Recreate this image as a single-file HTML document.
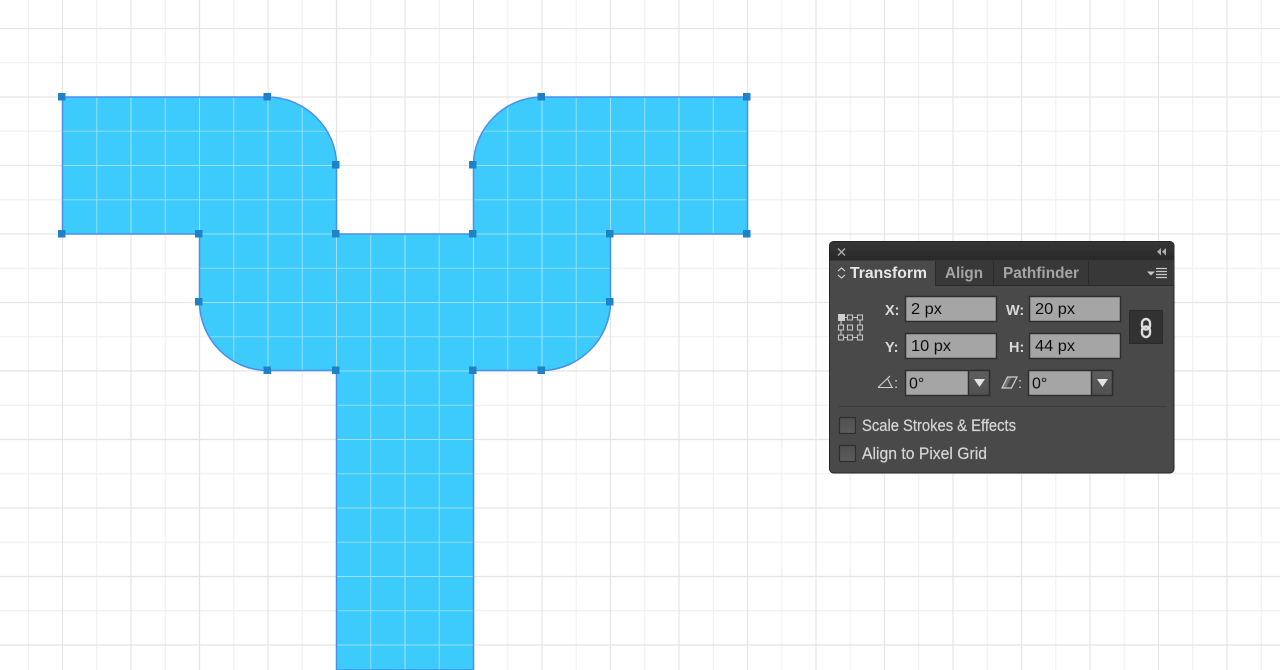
<!DOCTYPE html>
<html><head><meta charset="utf-8"><style>
html,body{margin:0;padding:0;background:#fff;width:1280px;height:670px;overflow:hidden}
svg{display:block;position:absolute;left:0;top:0}
text{font-family:"Liberation Sans",sans-serif}
</style></head><body>
<svg width="1280" height="670" viewBox="0 0 1280 670" xmlns="http://www.w3.org/2000/svg">
<defs>
<clipPath id="s"><path d="M62.5 97H267.5C305 97 336.5 128 336.5 165V234H473.5V165C473.5 128 505 97 541.5 97H747.5V234H610.5V302C610.5 339 579 370.5 541.5 370.5H473.5V670H336.5V370.5H267.5C230 370.5 199.5 339 199.5 302V234H62.5Z"/></clipPath>
<linearGradient id="hd" x1="0" y1="0" x2="0" y2="1"><stop offset="0" stop-color="#353535"/><stop offset="1" stop-color="#2a2a2a"/></linearGradient>
<linearGradient id="ar" x1="0" y1="0" x2="0" y2="1"><stop offset="0" stop-color="#5e5e5e"/><stop offset="1" stop-color="#505050"/></linearGradient>
<linearGradient id="cb" x1="0" y1="0" x2="0" y2="1"><stop offset="0" stop-color="#505050"/><stop offset="1" stop-color="#5c5c5c"/></linearGradient>
<filter id="soft" x="-5%" y="-5%" width="110%" height="110%"><feGaussianBlur stdDeviation="0.3"/></filter>
<path id="major" d="M62.5 0V670M131 0V670M199.5 0V670M268 0V670M336.500 0V670M405 0V670M473.500 0V670M542 0V670M610.500 0V670M679 0V670M747.500 0V670M816 0V670M884.500 0V670M953 0V670M1021.500 0V670M1090 0V670M1158.500 0V670M1227 0V670M0 28.500H1280M0 97H1280M0 165.500H1280M0 234H1280M0 302.500H1280M0 371H1280M0 439.500H1280M0 508H1280M0 576.500H1280M0 645H1280"/>
<path id="minor" d="M28.500 0V670M96.750 0V670M165.250 0V670M233.750 0V670M302.250 0V670M370.750 0V670M439.250 0V670M507.750 0V670M576.250 0V670M644.750 0V670M713.250 0V670M781.750 0V670M850.250 0V670M918.750 0V670M987.250 0V670M1055.750 0V670M1124.250 0V670M1192.750 0V670M1261.250 0V670M0 62.750H1280M0 131.250H1280M0 199.750H1280M0 268.250H1280M0 336.750H1280M0 405.250H1280M0 473.750H1280M0 542.250H1280M0 610.750H1280"/>
</defs>
<rect width="1280" height="670" fill="#fff"/>
<use href="#minor" fill="none" stroke="#f1f1f2" stroke-width="1.200"/>
<use href="#major" fill="none" stroke="#e5e5e6" stroke-width="1.200"/>
<path d="M62.5 97H267.5C305 97 336.5 128 336.5 165V234H473.5V165C473.5 128 505 97 541.5 97H747.5V234H610.5V302C610.5 339 579 370.5 541.5 370.5H473.5V670H336.5V370.5H267.5C230 370.5 199.5 339 199.5 302V234H62.5Z" fill="#3ccbfb"/>
<g clip-path="url(#s)">
<use href="#minor" fill="none" stroke="#8edcf8" stroke-width="1.100"/>
<use href="#major" fill="none" stroke="#9ce0f9" stroke-width="1.100"/>
</g>
<path d="M62.5 97H267.5C305 97 336.5 128 336.5 165V234H473.5V165C473.5 128 505 97 541.5 97H747.5V234H610.5V302C610.5 339 579 370.5 541.5 370.5H473.5V670H336.5V370.5H267.5C230 370.5 199.5 339 199.5 302V234H62.5Z" fill="none" stroke="#4a8ff0" stroke-width="1.500"/>
<g fill="#1f82c9">
<rect x="58" y="93" width="7.500" height="7.500"/><rect x="263.500" y="93" width="7.500" height="7.500"/><rect x="537.500" y="93" width="7.500" height="7.500"/><rect x="743" y="93" width="7.500" height="7.500"/>
<rect x="332" y="161" width="7.500" height="7.500"/><rect x="469" y="161" width="7.500" height="7.500"/>
<rect x="58" y="230" width="7.500" height="7.500"/><rect x="195" y="230" width="7.500" height="7.500"/><rect x="332" y="230" width="7.500" height="7.500"/><rect x="469" y="230" width="7.500" height="7.500"/><rect x="606" y="230" width="7.500" height="7.500"/><rect x="743" y="230" width="7.500" height="7.500"/>
<rect x="195" y="298" width="7.500" height="7.500"/><rect x="606" y="298" width="7.500" height="7.500"/>
<rect x="263.500" y="366.500" width="7.500" height="7.500"/><rect x="332" y="366.500" width="7.500" height="7.500"/><rect x="469" y="366.500" width="7.500" height="7.500"/><rect x="537.500" y="366.500" width="7.500" height="7.500"/>
</g>

<!-- panel -->
<g filter="url(#soft)">
<rect x="829.500" y="241.500" width="344.500" height="231.500" rx="4" fill="#4a4a4a" stroke="#262626"/>
<path d="M830 260V245.500Q830 242 834 242H1170Q1174 242 1174 245.500V260Z" fill="url(#hd)"/>
<rect x="830" y="260" width="344" height="25" fill="#393939"/>
<rect x="830" y="285" width="344" height="1" fill="#2c2c2c"/>
<rect x="830" y="261" width="105" height="26" fill="#4a4a4a"/>
<path d="M935.500 261V285M993.500 261V285M1088.500 261V285" stroke="#2c2c2c"/>
<path d="M838 248.500l7 7M845 248.500l-7 7" stroke="#b0b0b0" stroke-width="1.300" fill="none"/>
<path d="M1161 248v7.500l-4-3.750zM1166 248v7.500l-4-3.750z" fill="#b0b0b0"/>
<path d="M838 271l3.500-3 3.500 3M838 275l3.500 3 3.500-3" stroke="#d8d8d8" stroke-width="1.100" fill="none"/>
<text x="850" y="278" font-size="15.500" font-weight="700" fill="#e6e6e6" textLength="77" lengthAdjust="spacingAndGlyphs">Transform</text>
<text x="945" y="278" font-size="15.500" font-weight="700" fill="#a5a5a5" textLength="38" lengthAdjust="spacingAndGlyphs">Align</text>
<text x="1003" y="278" font-size="15.500" font-weight="700" fill="#a5a5a5" textLength="76" lengthAdjust="spacingAndGlyphs">Pathfinder</text>
<path d="M1147 271.500h8l-4 4z" fill="#c8c8c8"/>
<path d="M1156 268.500h11M1156 271.500h11M1156 274.500h11M1156 277.500h11" stroke="#c8c8c8" stroke-width="1.300"/>

<!-- reference point -->
<g fill="none" stroke="#c4c4c4" stroke-width="1.100">
<rect x="847.500" y="315" width="5" height="5"/><rect x="857.500" y="315" width="5" height="5"/>
<rect x="838.500" y="325" width="5" height="5"/><rect x="847.500" y="325" width="5" height="5"/><rect x="857.500" y="325" width="5" height="5"/>
<rect x="838.500" y="335" width="5" height="5"/><rect x="847.500" y="335" width="5" height="5"/><rect x="857.500" y="335" width="5" height="5"/>
<path d="M844 317.500h3.500M852.500 317.500h5M841 320v5M860 320v5M841 330v5M860 330v5M843.500 337.500h4M852.500 337.500h5"/>
</g>
<rect x="838" y="314" width="7" height="7" fill="#cfcfcf"/>

<!-- labels -->
<g font-size="14.500" font-weight="700" fill="#d9d9d9">
<text x="885" y="315">X:</text>
<text x="1006" y="315">W:</text>
<text x="885" y="352">Y:</text>
<text x="1009" y="352">H:</text>
</g>

<!-- inputs -->
<g fill="#a5a5a5" stroke="#2f2f2f" stroke-width="1.500">
<rect x="905.500" y="296.500" width="91" height="25"/>
<rect x="1029.500" y="296.500" width="91" height="25"/>
<rect x="905.500" y="333.500" width="91" height="25"/>
<rect x="1029.500" y="333.500" width="91" height="25"/>
</g>
<g font-size="16" fill="#111">
<text x="911" y="314" textLength="31" lengthAdjust="spacingAndGlyphs">2 px</text>
<text x="1035" y="314" textLength="40" lengthAdjust="spacingAndGlyphs">20 px</text>
<text x="911" y="351" textLength="40" lengthAdjust="spacingAndGlyphs">10 px</text>
<text x="1035" y="351" textLength="40" lengthAdjust="spacingAndGlyphs">44 px</text>
</g>

<!-- link -->
<rect x="1129.500" y="310.500" width="33" height="33" fill="#333" stroke="#2a2a2a"/>
<g fill="none" stroke="#dcdcdc" stroke-width="2.400">
<rect x="1142" y="319" width="8" height="10.500" rx="4"/>
<rect x="1142" y="326.500" width="8" height="10.500" rx="4"/>
</g>

<!-- dropdowns -->
<g stroke="#2f2f2f" stroke-width="1.500">
<rect x="905.500" y="370.500" width="84" height="25" fill="#a5a5a5"/>
<rect x="968.500" y="370.500" width="21" height="25" fill="url(#ar)"/>
<rect x="1028.500" y="370.500" width="84" height="25" fill="#a5a5a5"/>
<rect x="1091.500" y="370.500" width="21" height="25" fill="url(#ar)"/>
</g>
<path d="M974 379h11l-5.500 8zM1097 379h11l-5.500 8z" fill="#e4e4e4"/>
<g font-size="16" fill="#111">
<text x="909" y="388.500">0°</text>
<text x="1032" y="388.500">0°</text>
</g>
<path d="M878 387.500L890 376M878 387.500h15M887.500 378.500l4.500 9" fill="none" stroke="#d0d0d0" stroke-width="1.100"/>
<path d="M1002 388l5.500-11h9.500l-5.500 11z" fill="none" stroke="#d0d0d0" stroke-width="1.200"/>
<path d="M1002 388l5.500-11h4l-5.500 11z" fill="#cfcfcf" opacity=".3"/>
<text x="894" y="388" font-size="15" fill="#d0d0d0">:</text>
<text x="1018" y="388" font-size="15" fill="#d0d0d0">:</text>

<rect x="838" y="406" width="328" height="1" fill="#3c3c3c"/>

<!-- checkboxes -->
<g fill="url(#cb)" stroke="#2e2e2e" stroke-width="1.200">
<rect x="839.500" y="417.500" width="16" height="16" rx="1"/>
<rect x="839.500" y="445.500" width="16" height="16" rx="1"/>
</g>
<g font-size="16.500" fill="#d6d6d6" stroke="#d6d6d6" stroke-width=".2">
<text x="862" y="431" textLength="154" lengthAdjust="spacingAndGlyphs">Scale Strokes &amp; Effects</text>
<text x="862" y="459" textLength="125" lengthAdjust="spacingAndGlyphs">Align to Pixel Grid</text>
</g>
</g>
</svg>
</body></html>
